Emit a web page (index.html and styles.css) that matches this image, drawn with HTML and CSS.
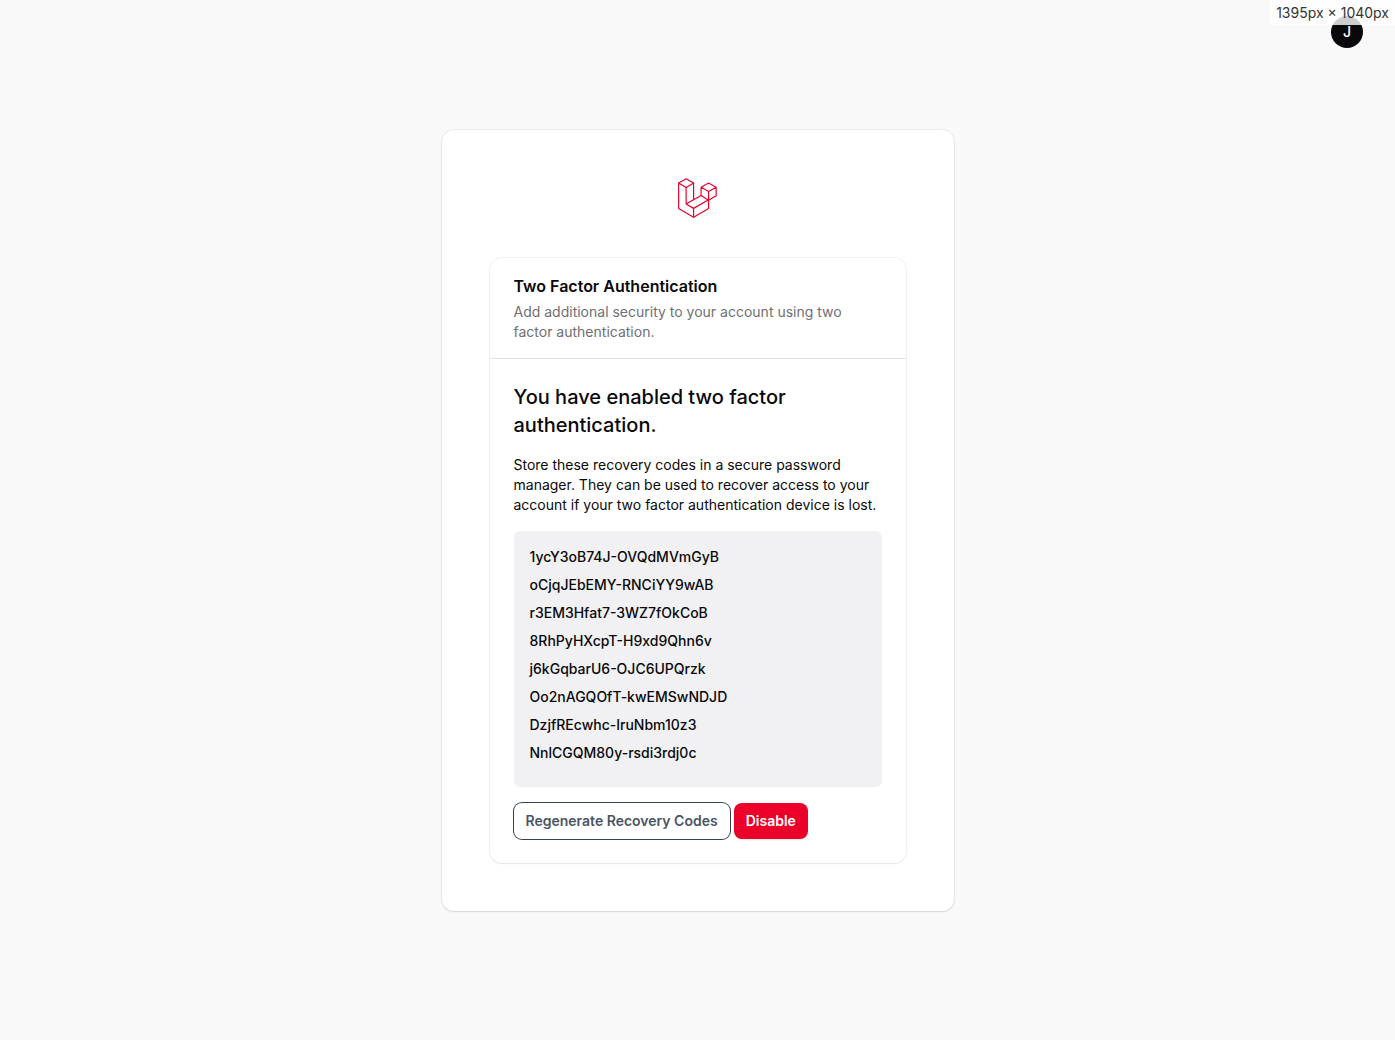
FILE: index.html
```
<!DOCTYPE html>
<html lang="en">
<head>
  <meta charset="utf-8">
  <meta name="viewport" content="width=device-width, initial-scale=1">
  <title>Two Factor Authentication</title>
  <link rel="stylesheet" href="styles.css">
</head>
<body>
  <div class="layout">
    <header class="topbar">
      <button type="button" class="avatar" aria-label="User menu">J</button>
    </header>
    <div class="viewport-size">1395px × 1040px</div>

    <main class="card">
      <a class="logo" href="#" aria-label="Home">
        <svg viewBox="0 0 50 51" width="39" height="40" fill="none" stroke="currentColor" stroke-width="1.5" stroke-linejoin="round" stroke-linecap="round" aria-hidden="true">
          <path d="M.8 6.3 10.4.8 20 6.3l-9.6 5.6zV39L20 50.1 39.2 39V28.3"/>
          <path d="M10.4 11.9v21.4L20 38.8v11.3M20 6.3v21.5M10.4 33.3l19.2-11M20 38.8l19.2-11"/>
          <path d="M29.6 11.8l9.6-5.5 9.7 5.5-9.7 5.5zv10.5l9.6 6 9.7-5.6V11.8M39.2 17.3v11"/>
        </svg>
      </a>

      <section class="section">
        <header class="section-header">
          <h1 class="section-title">Two Factor Authentication</h1>
          <p class="section-description">Add additional security to your account using two factor authentication.</p>
        </header>
        <div class="section-body">
          <h2 class="status">You have enabled two factor authentication.</h2>
          <p class="hint">Store these recovery codes in a secure password manager. They can be used to recover access to your account if your two factor authentication device is lost.</p>
          <ul class="codes">
            <li>1ycY3oB74J-OVQdMVmGyB</li>
            <li>oCjqJEbEMY-RNCiYY9wAB</li>
            <li>r3EM3Hfat7-3WZ7fOkCoB</li>
            <li>8RhPyHXcpT-H9xd9Qhn6v</li>
            <li>j6kGqbarU6-OJC6UPQrzk</li>
            <li>Oo2nAGQOfT-kwEMSwNDJD</li>
            <li>DzjfREcwhc-IruNbm10z3</li>
            <li>NnlCGQM80y-rsdi3rdj0c</li>
          </ul>
          <div class="actions">
            <button type="button" class="button button-outlined">Regenerate Recovery Codes</button>
            <button type="button" class="button button-danger">Disable</button>
          </div>
        </div>
      </section>
    </main>
  </div>
</body>
</html>
```
FILE: styles.css
```
*, *::before, *::after { box-sizing: border-box; }

body {
  margin: 0;
  background: #f9f9f9;
  color: #09090b;
  font-family: Inter, "Liberation Sans", sans-serif;
  font-size: 14px;
  line-height: 20px;
  -webkit-font-smoothing: antialiased;
}

h1, h2, p, ul { margin: 0; }

button { font: inherit; border: 0; cursor: pointer; }

.layout {
  position: relative;
  display: flex;
  flex-direction: column;
  align-items: center;
  justify-content: center;
  min-height: 100vh;
}

.topbar {
  position: absolute;
  top: 0;
  right: 0;
  display: flex;
  align-items: center;
  height: 64px;
  padding: 0 32px;
}

.avatar {
  width: 32px;
  height: 32px;
  padding: 0;
  border-radius: 50%;
  background: #09090b;
  color: #fff;
  font-weight: 500;
}

.viewport-size {
  position: absolute;
  top: 0;
  right: 0;
  padding: 3px 6px 2px;
  background: rgba(255, 255, 255, 0.8);
  color: #333;
}

.card {
  width: 100%;
  max-width: 512px;
  margin: 64px 0;
  padding: 48px;
  border-radius: 12px;
  background: #fff;
  box-shadow: 0 0 0 1px rgba(9, 9, 11, 0.05), 0 1px 2px rgba(0, 0, 0, 0.1);
}

.logo {
  display: flex;
  justify-content: center;
  margin-bottom: 40px;
  color: #e4002b;
}

.section {
  border-radius: 12px;
  background: #fff;
  box-shadow: 0 0 0 1px rgba(9, 9, 11, 0.05), 0 1px 2px rgba(0, 0, 0, 0.05);
}

.section-header {
  display: grid;
  gap: 4px;
  padding: 16px 24px;
  border-bottom: 1px solid #e0e0e2;
}

.section-title {
  font-size: 16px;
  font-weight: 600;
  line-height: 24px;
}

.section-description { color: #6f6f74; }

.section-body {
  display: grid;
  gap: 16px;
  padding: 24px;
}

.status {
  font-size: 20px;
  font-weight: 500;
  line-height: 28px;
}

.codes {
  display: grid;
  gap: 8px;
  padding: 16px 16px 24px;
  border-radius: 6px;
  background: #f1f1f3;
  font-weight: 500;
  list-style: none;
}

.actions {
  display: flex;
  flex-wrap: wrap;
  gap: 4px;
}

.button {
  padding: 8px 12px;
  border-radius: 8px;
  font-weight: 600;
}

.button-outlined {
  background: #fff;
  color: #4b5563;
  box-shadow: 0 0 0 1px #374151;
}

.button-danger {
  background: #eb0029;
  color: #fff;
  box-shadow: 0 1px 2px rgba(0, 0, 0, 0.1);
}
```
